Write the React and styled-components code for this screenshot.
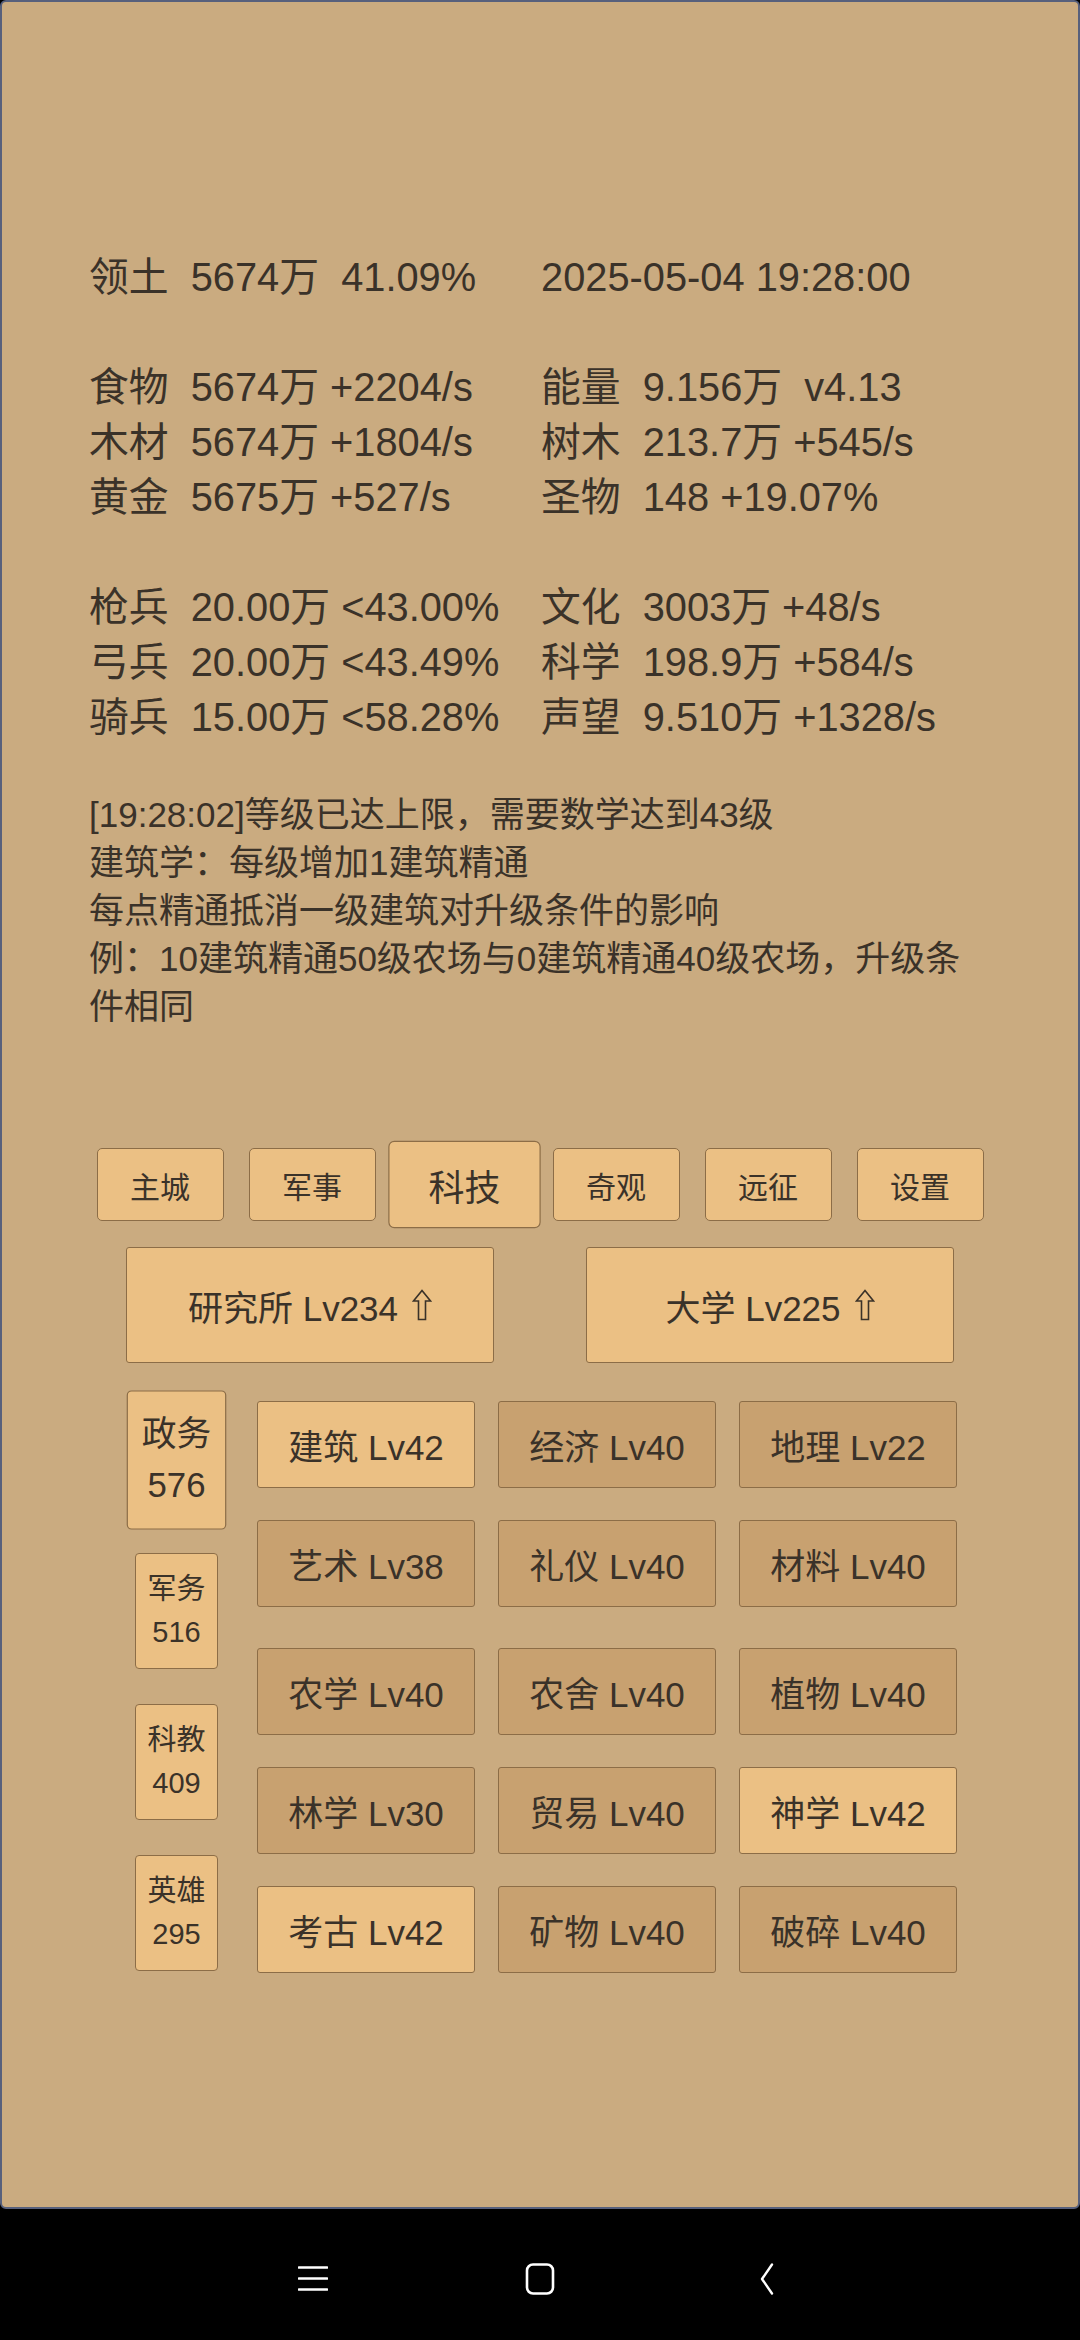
import styled, { createGlobalStyle } from 'styled-components';

const GlobalStyle = createGlobalStyle`
    html, body {
        margin: 0;
        padding: 0;
        background: #000;
    }
    * {
        box-sizing: border-box;
    }
`;

const stats = [
    [['领土  5674万  41.09%', '2025-05-04 19:28:00']],
    [
        ['食物  5674万 +2204/s', '能量  9.156万  v4.13'],
        ['木材  5674万 +1804/s', '树木  213.7万 +545/s'],
        ['黄金  5675万 +527/s', '圣物  148 +19.07%'],
    ],
    [
        ['枪兵  20.00万 <43.00%', '文化  3003万 +48/s'],
        ['弓兵  20.00万 <43.49%', '科学  198.9万 +584/s'],
        ['骑兵  15.00万 <58.28%', '声望  9.510万 +1328/s'],
    ],
];

const logs = [
    '[19:28:02]等级已达上限，需要数学达到43级',
    '建筑学：每级增加1建筑精通',
    '每点精通抵消一级建筑对升级条件的影响',
    '例：10建筑精通50级农场与0建筑精通40级农场，升级条件相同',
];

const tabs = ['主城', '军事', '科技', '奇观', '远征', '设置'];

const sides = [
    { name: '政务', num: 576, active: true },
    { name: '军务', num: 516 },
    { name: '科教', num: 409 },
    { name: '英雄', num: 295 },
];

const techRows = [
    [['建筑 Lv42', true], ['经济 Lv40'], ['地理 Lv22']],
    [['艺术 Lv38'], ['礼仪 Lv40'], ['材料 Lv40']],
    [['农学 Lv40'], ['农舍 Lv40'], ['植物 Lv40']],
    [['林学 Lv30'], ['贸易 Lv40'], ['神学 Lv42', true]],
    [['考古 Lv42', true], ['矿物 Lv40'], ['破碎 Lv40']],
];

// outlined "upgrade" arrow next to building levels
const UpArrow = () => (
    <ArrowIcon viewBox="0 0 20 32">
        <path d="M10 1.5L18.5 12H13.5V30.5H6.5V12H1.5Z" fill="none" stroke="#3a3229" strokeWidth="1.6" />
    </ArrowIcon>
);

export default function App() {
    return (
        <Screen>
            <GlobalStyle />
            <Frame>
                <Stats>
                    {stats.map((group, gi) => (
                        <StatGroup key={gi}>
                            {group.map(([left, right], ri) => (
                                <StatRow key={ri}>
                                    <span>{left}</span>
                                    <span>{right}</span>
                                </StatRow>
                            ))}
                        </StatGroup>
                    ))}
                </Stats>
                <Log>
                    {logs.map((line, i) => (
                        <div key={i}>{line}</div>
                    ))}
                </Log>
                <Tabs>
                    {tabs.map(t => (
                        <TabSlot key={t}>
                            <Tab $active={t === '科技'}>{t}</Tab>
                        </TabSlot>
                    ))}
                </Tabs>
                <Buildings>
                    <Building><span>研究所 Lv234</span><UpArrow /></Building>
                    <Building><span>大学 Lv225</span><UpArrow /></Building>
                </Buildings>
                <TechArea>
                    <SideList>
                        {sides.map(s => (
                            <SideButton key={s.name} $active={s.active}>
                                <div>{s.name}</div>
                                <div>{s.num}</div>
                            </SideButton>
                        ))}
                    </SideList>
                    <TechGrid>
                        {techRows.map((row, ri) => (
                            <TechRow key={ri} $wide={ri === 2}>
                                {row.map(([label, done]) => (
                                    <TechButton key={label} $done={done}>{label}</TechButton>
                                ))}
                            </TechRow>
                        ))}
                    </TechGrid>
                </TechArea>
            </Frame>
            <NavBar>
                <NavIcon viewBox="0 0 30 32">
                    <path d="M1 4.5h28M1 15.5h28M1 26.5h28" stroke="#fff" strokeWidth="2.6" strokeLinecap="round" />
                </NavIcon>
                <NavIcon viewBox="0 0 30 32">
                    <rect x="2" y="1.5" width="26" height="29" rx="6" fill="none" stroke="#fff" strokeWidth="2.6" />
                </NavIcon>
                <NavIcon viewBox="0 0 30 32">
                    <path d="M20 1.5L10 16l10 14.5" fill="none" stroke="#fff" strokeWidth="2.4" strokeLinecap="round" strokeLinejoin="round" />
                </NavIcon>
            </NavBar>
        </Screen>
    );
}

const Screen = styled.div`
    width: 1080px;
    height: 2340px;
    display: flex;
    flex-direction: column;
    background: #000;
    font-family: "Liberation Sans", "Noto Sans CJK SC", sans-serif;
    color: #3a3229;
`;

const Frame = styled.div`
    height: 2209px;
    background: #caab80;
    border: 2px solid #57607c;
    border-radius: 6px;
    padding: 248px 0 0 0;
`;

const Stats = styled.div`
    padding-left: 87px;
    font-size: 39.8px;
`;

const StatGroup = styled.div`
    & + & {
        margin-top: 55px;
    }
`;

const StatRow = styled.div`
    display: grid;
    grid-template-columns: 452px auto;
    height: 55px;
    line-height: 55px;
    white-space: pre;
`;

const Log = styled.div`
    margin: 46px 0 0 87px;
    width: 900px;
    font-size: 35px;
    line-height: 48px;
`;

const Tabs = styled.div`
    margin-top: 117px;
    display: flex;
    justify-content: center;
`;

const TabSlot = styled.div`
    width: 152px;
    display: flex;
    justify-content: center;
`;

const Tab = styled.div`
    width: 127px;
    height: 73px;
    display: flex;
    align-items: center;
    justify-content: center;
    font-size: 30px;
    background: #ebc084;
    border: 1.5px solid #8c6d47;
    border-radius: 5px;
    transform: ${p => (p.$active ? 'scale(1.2)' : 'none')};
`;

const Buildings = styled.div`
    margin-top: 26px;
    display: flex;
    justify-content: center;
    gap: 92px;
`;

const Building = styled.div`
    width: 368px;
    height: 116px;
    display: flex;
    align-items: center;
    justify-content: center;
    font-size: 35px;
    background: #ebc084;
    border: 1.5px solid #8c6d47;
    border-radius: 3px;
`;

const ArrowIcon = styled.svg`
    width: 20px;
    height: 32px;
    margin-left: 14px;
`;

const TechArea = styled.div`
    margin-top: 38px;
    padding-left: 133px;
    display: flex;
    gap: 39px;
`;

const SideList = styled.div`
    width: 83px;
    display: flex;
    flex-direction: column;
    gap: 35px;
    padding-top: 1px;
`;

const SideButton = styled.div`
    width: 83px;
    height: 116px;
    display: flex;
    flex-direction: column;
    align-items: center;
    justify-content: center;
    font-size: 29px;
    line-height: 43px;
    background: #ebc084;
    border: 1.5px solid #8c6d47;
    border-radius: 4px;
    transform: ${p => (p.$active ? 'scale(1.2)' : 'none')};
`;

const TechGrid = styled.div`
    display: flex;
    flex-direction: column;
`;

const TechRow = styled.div`
    display: grid;
    grid-template-columns: repeat(3, 218px);
    gap: 23px;
    margin-top: ${p => (p.$wide ? '41px' : '32px')};
    &:first-child {
        margin-top: 0;
    }
`;

const TechButton = styled.div`
    height: 87px;
    display: flex;
    align-items: center;
    justify-content: center;
    font-size: 35px;
    background: ${p => (p.$done ? '#ebc084' : '#c8a170')};
    border: 1.5px solid #8c6d47;
    border-radius: 3px;
`;

const NavBar = styled.div`
    flex: 1;
    display: flex;
    align-items: center;
    justify-content: center;
    gap: 197px;
    padding-top: 8px;
`;

const NavIcon = styled.svg`
    width: 30px;
    height: 32px;
`;
